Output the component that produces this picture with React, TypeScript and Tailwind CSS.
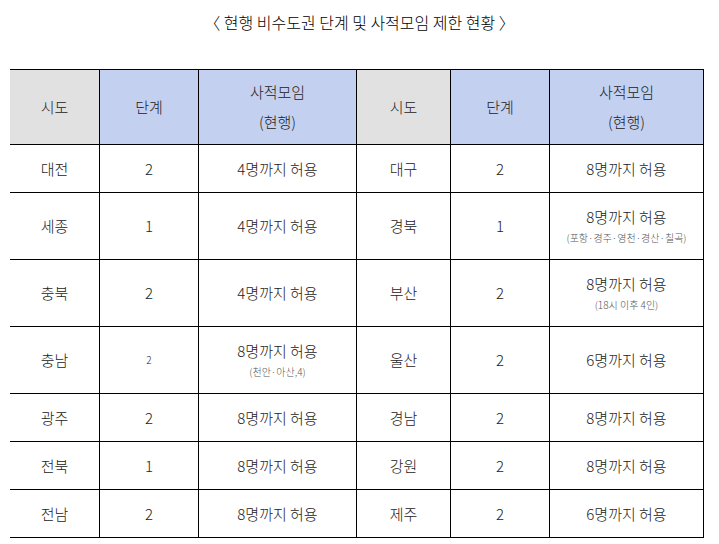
import React from "react";

const font = { fontFamily: '"Noto Sans CJK KR", "Noto Sans", sans-serif' };

function Cell({
  w,
  h,
  main,
  sub,
  small,
}: {
  w: string;
  h: string;
  main: string;
  sub?: string;
  small?: boolean;
}) {
  return (
    <div
      className={`${w} ${h} flex flex-col items-center justify-center border-r border-b border-black`}
    >
      <div className={small ? "text-[10px] leading-[20px] text-[#222]" : "text-[15px] leading-[20px] text-[#222]"}>{main}</div>
      {sub && <div className="mt-[4px] text-[10px] leading-[14px] text-[#555]">{sub}</div>}
    </div>
  );
}

export default function App() {
  const rows: { h: string; l: { n: string; s: string; m: string; sub?: string; small?: boolean }; r: { n: string; s: string; m: string; sub?: string } }[] = [
    { h: "h-[48px]", l: { n: "대전", s: "2", m: "4명까지 허용" }, r: { n: "대구", s: "2", m: "8명까지 허용" } },
    { h: "h-[67px]", l: { n: "세종", s: "1", m: "4명까지 허용" }, r: { n: "경북", s: "1", m: "8명까지 허용", sub: "(포항·경주·영천·경산·칠곡)" } },
    { h: "h-[67px]", l: { n: "충북", s: "2", m: "4명까지 허용" }, r: { n: "부산", s: "2", m: "8명까지 허용", sub: "(18시 이후 4인)" } },
    { h: "h-[67px]", l: { n: "충남", s: "2", m: "8명까지 허용", sub: "(천안·아산,4)", small: true }, r: { n: "울산", s: "2", m: "6명까지 허용" } },
    { h: "h-[48px]", l: { n: "광주", s: "2", m: "8명까지 허용" }, r: { n: "경남", s: "2", m: "8명까지 허용" } },
    { h: "h-[48px]", l: { n: "전북", s: "1", m: "8명까지 허용" }, r: { n: "강원", s: "2", m: "8명까지 허용" } },
    { h: "h-[48px]", l: { n: "전남", s: "2", m: "8명까지 허용" }, r: { n: "제주", s: "2", m: "6명까지 허용" } },
  ];

  return (
    <div className="w-[719px] h-[544px] bg-white overflow-hidden font-light" style={font}>
      <div className="h-[69px] pt-[12px] text-center text-[16px] leading-[20px] text-black">
        〈 현행 비수도권 단계 및 사적모임 제한 현황 〉
      </div>
      <div className="ml-[10px] w-[694px] border-t border-black">
        <div className="flex">
          <div className="w-[90px] h-[75px] flex items-center justify-center bg-[#e1e1e1] border-r border-b border-black text-[15px] text-[#222]">시도</div>
          <div className="w-[99px] h-[75px] flex items-center justify-center bg-[#c4d0ef] border-r border-b border-black text-[15px] text-[#222]">단계</div>
          <div className="w-[158px] h-[75px] flex flex-col items-center justify-center bg-[#c4d0ef] border-r border-b border-black text-[15px] leading-[30px] text-[#222]">
            <div>사적모임</div>
            <div>(현행)</div>
          </div>
          <div className="w-[94px] h-[75px] flex items-center justify-center bg-[#e1e1e1] border-r border-b border-black text-[15px] text-[#222]">시도</div>
          <div className="w-[99px] h-[75px] flex items-center justify-center bg-[#c4d0ef] border-r border-b border-black text-[15px] text-[#222]">단계</div>
          <div className="w-[154px] h-[75px] flex flex-col items-center justify-center bg-[#c4d0ef] border-r border-b border-black text-[15px] leading-[30px] text-[#222]">
            <div>사적모임</div>
            <div>(현행)</div>
          </div>
        </div>
        {rows.map((r, i) => (
          <div key={i} className="flex">
            <Cell w="w-[90px]" h={r.h} main={r.l.n} />
            <Cell w="w-[99px]" h={r.h} main={r.l.s} small={r.l.small} />
            <Cell w="w-[158px]" h={r.h} main={r.l.m} sub={r.l.sub} />
            <Cell w="w-[94px]" h={r.h} main={r.r.n} />
            <Cell w="w-[99px]" h={r.h} main={r.r.s} />
            <Cell w="w-[154px]" h={r.h} main={r.r.m} sub={r.r.sub} />
          </div>
        ))}
      </div>
    </div>
  );
}
